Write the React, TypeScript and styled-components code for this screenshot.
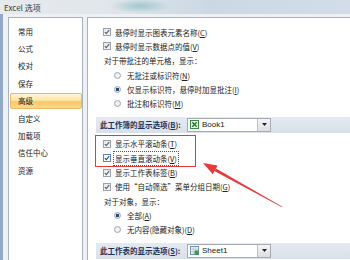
import React from 'react';
import styled, { createGlobalStyle } from 'styled-components';

const GlobalStyle = createGlobalStyle`
    html, body {
        margin: 0;
        padding: 0;
    }
    body {
        width: 350px;
        height: 260px;
        overflow: hidden;
        background: #edf0f4;
    }
`;

const Window = styled.div`
    position: relative;
    width: 350px;
    height: 260px;
    overflow: hidden;
    display: flex;
    flex-direction: column;
    font-family: 'Noto Sans CJK SC', 'Liberation Sans', sans-serif;
    font-size: 7.5px;
    color: #222;
    background: #edf0f4;
`;

const TitleBar = styled.div`
    height: 14px;
    flex-shrink: 0;
    display: flex;
    align-items: center;
    padding-left: 4px;
    font-size: 8px;
    color: #3a3a3a;
    background: radial-gradient(ellipse 30px 7px at 140px 6px, rgba(90, 170, 170, 0.45), transparent),
        linear-gradient(90deg, #e7eaed 0%, #e1e6eb 30%, #cbd8e4 60%, #d2dde8 100%);
`;

const Frame = styled.div`
    flex: 1;
    min-height: 0;
    display: flex;
    gap: 4px;
    padding: 3px 0 0 5px;
    border-left: 3px solid #93aac6;
`;

const Sidebar = styled.ul`
    width: 75px;
    flex-shrink: 0;
    box-sizing: border-box;
    margin: 0;
    padding: 4px 0 0;
    list-style: none;
    background: #fff;
    border: 1px solid #a9b3bf;
    border-bottom: none;
`;

const NavItem = styled.li<{ $active?: boolean }>`
    height: 14.4px;
    margin: 1px 0 1px 1px;
    padding-left: 7px;
    display: flex;
    align-items: center;
    border-radius: 2px;
    border: 1px solid ${p => (p.$active ? '#e9b964' : 'transparent')};
    background: ${p =>
        p.$active ? 'linear-gradient(#fff5d6 0%, #fde6a6 45%, #fbc66a 55%, #fdd88c 100%)' : 'transparent'};
`;

const Main = styled.div`
    flex: 1;
    min-width: 0;
    padding: 7px 0 0 8px;
    background: #fff;
    border: 1px solid #a9b3bf;
    border-right: none;
    border-bottom: none;
`;

const Row = styled.div<{ $indent: number }>`
    height: 14.3px;
    display: flex;
    align-items: center;
    padding-left: ${p => p.$indent}px;
    white-space: nowrap;
`;

const Key = styled.span`
    text-decoration: underline;
`;

const Box = styled.span<{ $focus?: boolean }>`
    width: 8px;
    height: 8px;
    box-sizing: border-box;
    margin-right: 4px;
    flex-shrink: 0;
    display: inline-flex;
    border: 1px solid ${p => (p.$focus ? '#5f86b8' : '#9ba2aa')};
    background: ${p => (p.$focus ? '#ffffff' : 'linear-gradient(#e6e8ea, #f7f8f9)')};
`;

const Radio = styled.span<{ $on?: boolean }>`
    width: 7px;
    height: 7px;
    box-sizing: border-box;
    margin-right: 6px;
    flex-shrink: 0;
    border-radius: 50%;
    border: 1px solid #a2a8b0;
    background: ${p =>
        p.$on
            ? 'radial-gradient(circle, #2c4c78 0 1.6px, #dfe5ec 2px)'
            : 'radial-gradient(circle, #f3f4f6 0 1.5px, #dcdfe3 3px)'};
`;

const FocusText = styled.span`
    outline: 1px dotted #555;
    outline-offset: 1px;
`;

const SectionBand = styled.div`
    height: 16px;
    margin: 6px 0 4px;
    display: flex;
    align-items: center;
    padding-left: 4px;
    background: linear-gradient(#e5eaf1, #d9e0e9);
`;

const BandLabel = styled.span`
    width: 87px;
    flex-shrink: 0;
    font-weight: bold;
    color: #1c3158;
    white-space: nowrap;
`;

const Select = styled.div`
    width: 84px;
    height: 14px;
    box-sizing: border-box;
    display: flex;
    align-items: center;
    background: #fff;
    border: 1px solid #a5acb5;
    font-family: 'Liberation Sans', sans-serif;
    font-size: 8px;
    color: #222;
`;

const SelectIcon = styled.svg`
    width: 9px;
    height: 9px;
    margin: 0 3px 0 2px;
    flex-shrink: 0;
`;

const SelectText = styled.span`
    flex: 1;
`;

const SelectButton = styled.span`
    width: 12px;
    height: 100%;
    display: flex;
    align-items: center;
    justify-content: center;
    border-left: 1px solid #b9bfc7;
    background: linear-gradient(#f4f5f6, #dcdfe3);
`;

const RedBox = styled.div`
    position: absolute;
    left: 95px;
    top: 135px;
    width: 101px;
    height: 32px;
    box-sizing: border-box;
    border: 1.5px solid #e5393c;
`;

const ArrowLayer = styled.svg`
    position: absolute;
    left: 0;
    top: 0;
    width: 350px;
    height: 260px;
    pointer-events: none;
`;

const Check = ({ focus }: { focus?: boolean }) => (
    <Box $focus={focus}>
        <svg width="6" height="6" viewBox="0 0 6 6">
            <path
                d="M0.8 3.1 L2.3 4.6 L5.2 1.2"
                fill="none"
                stroke={focus ? '#1f58a8' : '#5d6670'}
                strokeWidth="1.2"
            />
        </svg>
    </Box>
);

const BookIcon = () => (
    <SelectIcon viewBox="0 0 9 9">
        <rect x="0.5" y="0.5" width="8" height="8" fill="#eaf5ea" stroke="#3b8a3f" />
        <path d="M2.3 2.2 L6.7 6.8 M6.7 2.2 L2.3 6.8" stroke="#1f7a2a" strokeWidth="1.3" />
    </SelectIcon>
);

const SheetIcon = () => (
    <SelectIcon viewBox="0 0 9 9">
        <rect x="0.5" y="0.5" width="8" height="8" fill="#f4f8fb" stroke="#6a8fb5" />
        <path d="M0.5 3.2 H8.5 M0.5 5.8 H8.5 M3.2 0.5 V8.5 M5.8 0.5 V8.5" stroke="#9db5cc" strokeWidth="0.6" />
        <rect x="4.5" y="4.5" width="4" height="4" fill="#3c9a44" />
    </SelectIcon>
);

const DropArrow = () => (
    <svg width="5" height="3" viewBox="0 0 5 3">
        <path d="M0 0 H5 L2.5 3 Z" fill="#222" />
    </svg>
);

const navItems = ['常用', '公式', '校对', '保存', '高级', '自定义', '加载项', '信任中心', '资源'];

const App = () => {
    return (
        <Window>
            <GlobalStyle />
            <TitleBar>Excel 选项</TitleBar>
            <Frame>
                <Sidebar>
                    {navItems.map(item => (
                        <NavItem key={item} $active={item === '高级'}>
                            {item}
                        </NavItem>
                    ))}
                </Sidebar>

                <Main>
                    <Row $indent={7}>
                        <Check />
                        悬停时显示图表元素名称(<Key>C</Key>)
                    </Row>
                    <Row $indent={7}>
                        <Check />
                        悬停时显示数据点的值(<Key>V</Key>)
                    </Row>
                    <Row $indent={8}>对于带批注的单元格，显示：</Row>
                    <Row $indent={18}>
                        <Radio />
                        无批注或标识符(<Key>N</Key>)
                    </Row>
                    <Row $indent={18}>
                        <Radio $on />
                        仅显示标识符，悬停时加显批注(<Key>I</Key>)
                    </Row>
                    <Row $indent={18}>
                        <Radio />
                        批注和标识符(<Key>M</Key>)
                    </Row>

                    <SectionBand>
                        <BandLabel>
                            此工作簿的显示选项(<Key>B</Key>):
                        </BandLabel>
                        <Select>
                            <BookIcon />
                            <SelectText>Book1</SelectText>
                            <SelectButton>
                                <DropArrow />
                            </SelectButton>
                        </Select>
                    </SectionBand>

                    <Row $indent={7}>
                        <Check />
                        显示水平滚动条(<Key>T</Key>)
                    </Row>
                    <Row $indent={7}>
                        <Check focus />
                        <FocusText>
                            显示垂直滚动条(<Key>V</Key>)
                        </FocusText>
                    </Row>
                    <Row $indent={7}>
                        <Check />
                        显示工作表标签(<Key>B</Key>)
                    </Row>
                    <Row $indent={7}>
                        <Check />
                        使用“自动筛选”菜单分组日期(<Key>G</Key>)
                    </Row>
                    <Row $indent={8}>对于对象，显示：</Row>
                    <Row $indent={18}>
                        <Radio $on />
                        全部(<Key>A</Key>)
                    </Row>
                    <Row $indent={18}>
                        <Radio />
                        无内容(隐藏对象)(<Key>D</Key>)
                    </Row>

                    <SectionBand>
                        <BandLabel>
                            此工作表的显示选项(<Key>S</Key>):
                        </BandLabel>
                        <Select>
                            <SheetIcon />
                            <SelectText>Sheet1</SelectText>
                            <SelectButton>
                                <DropArrow />
                            </SelectButton>
                        </Select>
                    </SectionBand>
                </Main>
            </Frame>

            <RedBox />
            <ArrowLayer viewBox="0 0 350 260">
                <polygon points="203,163 212.8,174.2 217.6,165.4" fill="#e5393c" />
                <polygon points="214.4,171.1 216.0,168.5 282.4,206.7 282.0,207.3" fill="#e5393c" />
            </ArrowLayer>
        </Window>
    );
};

export default App;
